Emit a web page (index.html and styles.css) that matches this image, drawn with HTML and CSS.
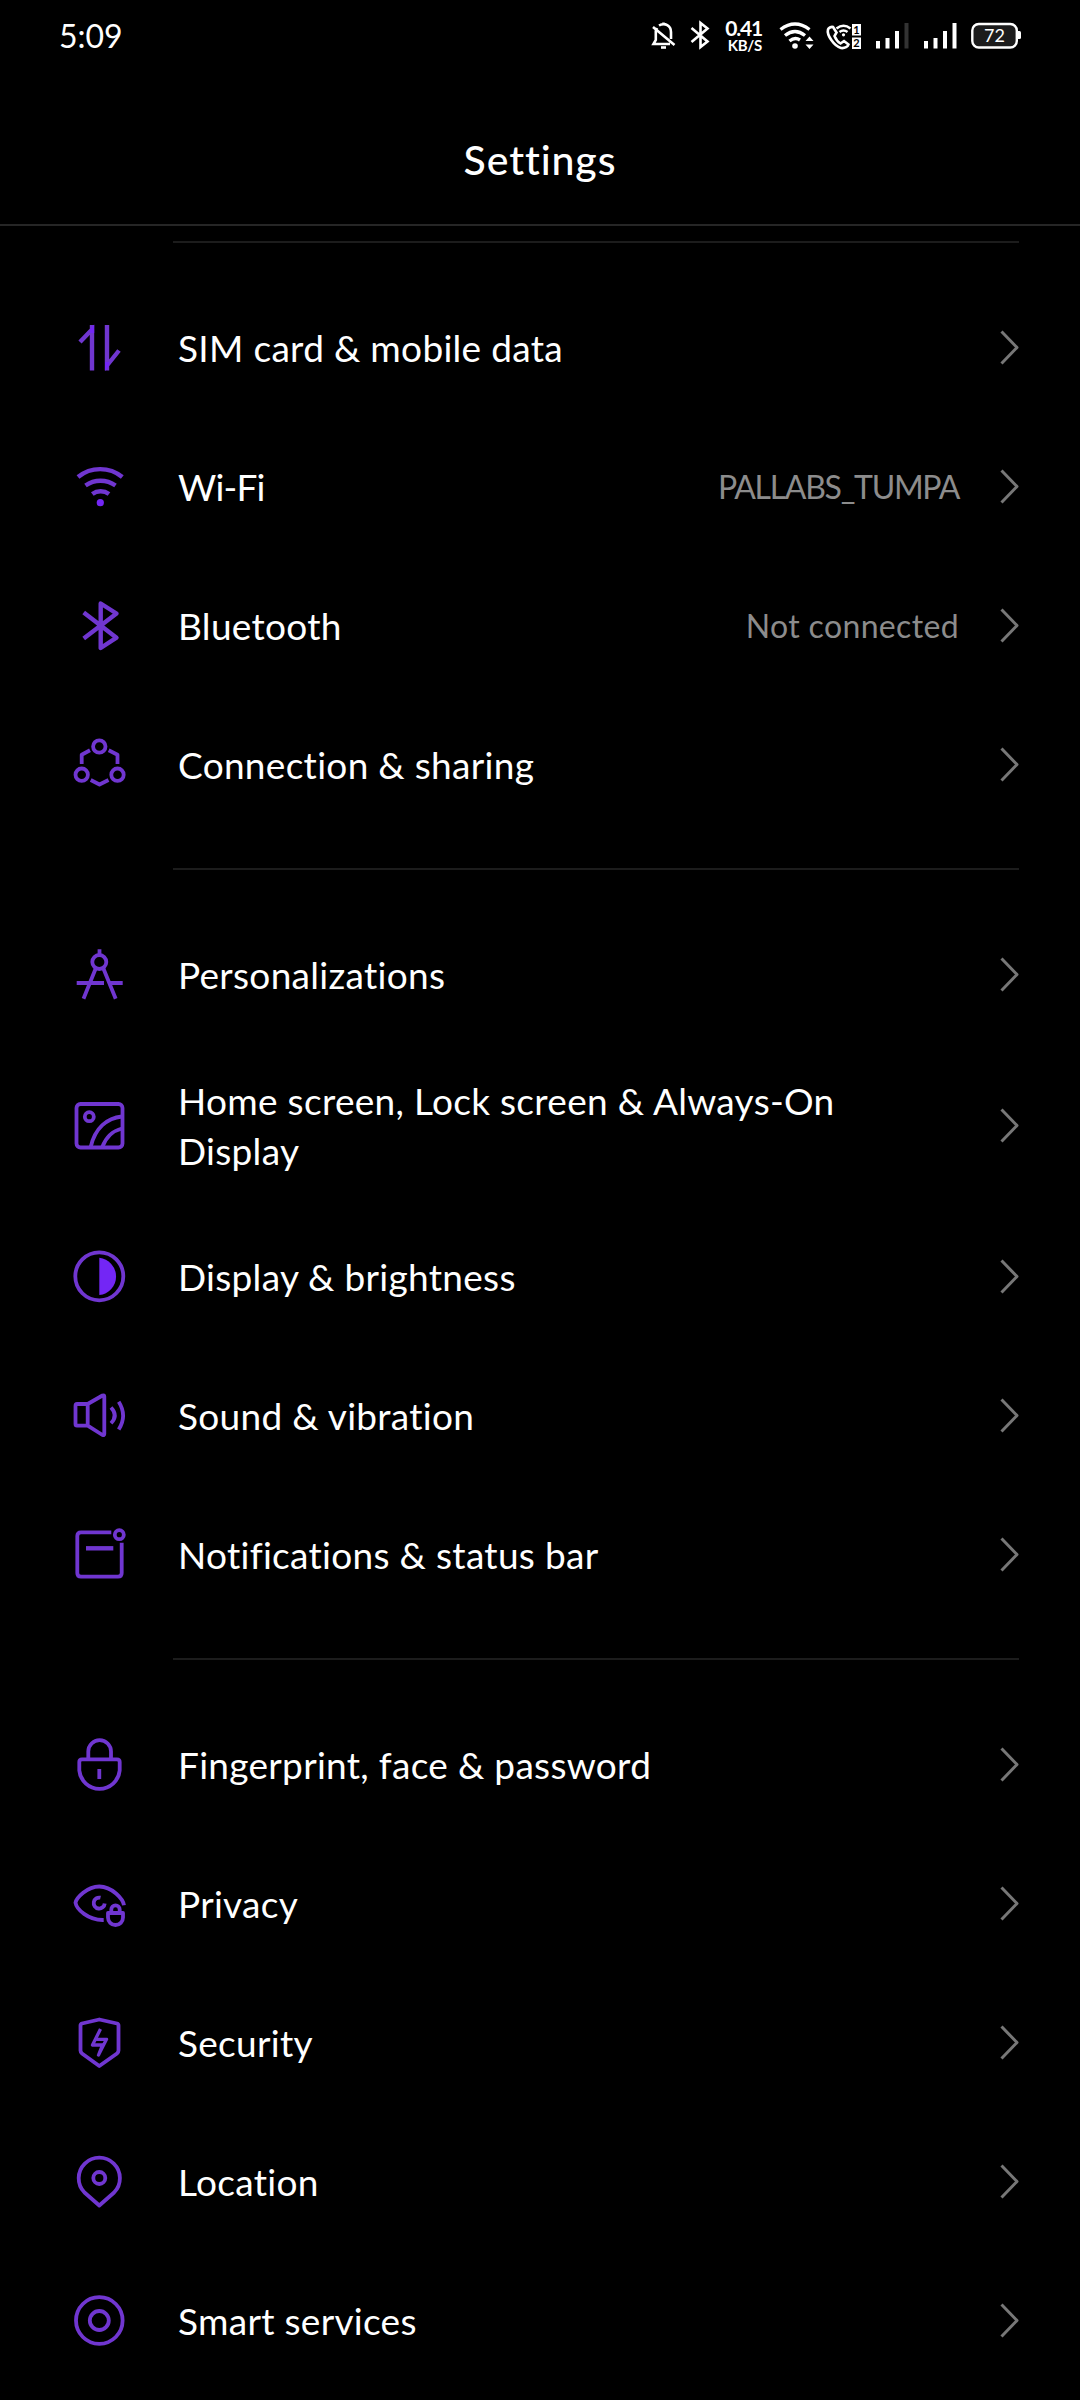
FILE: index.html
```html
<!DOCTYPE html>
<html lang="en">
<head>
    <meta charset="UTF-8">
    <meta name="viewport" content="width=device-width, initial-scale=1.0">
    <title>Settings</title>
    <link rel="stylesheet" href="styles.css">
</head>
<body>
    <!-- Status bar -->
    <div class="status-bar">
        <span class="time">5:09</span>
        <div class="status-icons">
            <svg width="25" height="30" viewBox="0 0 25 30">
                <path d="M6 8L4.800 11V20L2.500 24H19M8 5.500C14 2 20 6 20 12V19M12.500 2.500V4M2 7L23.500 25"/>
                <path d="M10 27.500H15"/>
            </svg>
            <svg width="21" height="30" viewBox="0 0 21 30">
                <path d="M1.500 8L17.500 21.500L10.500 27V3L17.500 8.500L1.500 22"/>
            </svg>
            <div class="speed">
                <span class="speed-value">0.41</span>
                <span class="speed-unit">KB/S</span>
            </div>
            <svg width="35" height="30" viewBox="0 0 35 30">
                <path class="thick" d="M3.500 9.500Q18 -1.500 32.500 9.500M8 15.500Q18 7.500 28 15.500M12.500 21Q18 16.500 23 20"/>
                <circle class="solid" cx="18" cy="26" r="2.800"/>
                <path class="solid" d="M28.500 21L32.500 16.500L36.500 21ZM28.500 24.500H36.500L32.500 29Z"/>
            </svg>
            <svg width="35" height="30" viewBox="0 0 35 30">
                <path d="M2 9.500C0.500 15 8 26 15 28C19 28.500 22 26.500 22.500 24.500L18 21L14.500 23.500C12 22 9.500 18.500 8.500 16L10.500 12.500L7 7C5 6.500 2.500 8 2 9.500Z"/>
                <path d="M10.500 8.500Q17.500 3 24.500 8.500M13.500 12Q17.500 9 21.500 12"/>
                <circle class="solid" cx="17.500" cy="14.800" r="1.600"/>
                <rect class="solid" x="26" y="4" width="9" height="11.500"/>
                <rect class="solid" x="26" y="17.500" width="9" height="11.500"/>
                <text class="sim-no" x="30.500" y="13.500">1</text>
                <text class="sim-no" x="30.500" y="27">2</text>
            </svg>
            <svg width="34" height="30" viewBox="0 0 34 30">
                <path class="solid" d="M1 21h4v7.500h-4zM10.500 18h4v10.500h-4zM20 11h4v17.500h-4z"/>
                <path class="off" d="M29.500 3h4v25.500h-4z"/>
            </svg>
            <svg width="34" height="30" viewBox="0 0 34 30">
                <path class="solid" d="M1 21h4v7.500h-4zM10.500 18h4v10.500h-4zM20 11h4v17.500h-4zM29.500 3h4v25.500h-4z"/>
            </svg>
            <svg width="51" height="30" viewBox="0 0 51 30">
                <rect class="battery" x="1.300" y="4" width="44.500" height="23.500" rx="6.500"/>
                <path class="solid" d="M47 11h1.500q1.500 0 1.500 1.500v5q0 1.500 -1.500 1.500h-1.500z"/>
                <text class="battery-level" x="23.500" y="21.500">72</text>
            </svg>
        </div>
    </div>

    <h1>Settings</h1>

    <!-- Connections -->
    <ul class="group">
        <li class="row">
            <svg class="icon" width="60" height="61" viewBox="0 0 60 61">
                <path class="wide" d="M10 25L22 12.500M22 8V53.500M37 8V53.500M37 48.500L49 33.500"/>
                <path class="fill" d="M20 12L24.200 7.500V16H20ZM35 45H39V49L35 54Z"/>
            </svg>
            <span class="label">SIM card &amp; mobile data</span>
            <svg class="arrow" width="20" height="37" viewBox="0 0 20 37"><path d="M1.500 2.500L17 18.500L1.500 34.500"/></svg>
        </li>
        <li class="row">
            <svg class="icon" width="60" height="61" viewBox="0 0 60 61">
                <path class="wide" d="M8 21A35 35 0 0 1 52.300 21M15.500 29.500A26 26 0 0 1 45.500 29.500M22.300 38A14 14 0 0 1 39 38"/>
                <circle class="fill" cx="30.300" cy="46.700" r="3.600"/>
            </svg>
            <span class="label narrow">Wi-Fi</span>
            <span class="value caps">PALLABS_TUMPA</span>
            <svg class="arrow" width="20" height="37" viewBox="0 0 20 37"><path d="M1.500 2.500L17 18.500L1.500 34.500"/></svg>
        </li>
        <li class="row">
            <svg class="icon" width="60" height="61" viewBox="0 0 60 61">
                <path class="wide" d="M13.700 17.500L46.500 42.700L30.700 53V8.500L46.500 18.500L13.700 43.500"/>
            </svg>
            <span class="label">Bluetooth</span>
            <span class="value">Not connected</span>
            <svg class="arrow" width="20" height="37" viewBox="0 0 20 37"><path d="M1.500 2.500L17 18.500L1.500 34.500"/></svg>
        </li>
        <li class="row">
            <svg class="icon" width="60" height="61" viewBox="0 0 60 61">
                <circle cx="29.300" cy="12.500" r="6.200"/>
                <circle cx="11.700" cy="40.700" r="6.200"/>
                <circle cx="47.500" cy="40.700" r="6.200"/>
                <path d="M11.700 30V20.700L20 16.300M38.700 16.300L47.500 20.700V30M20.700 46L29.500 50.500L38.500 46"/>
            </svg>
            <span class="label">Connection &amp; sharing</span>
            <svg class="arrow" width="20" height="37" viewBox="0 0 20 37"><path d="M1.500 2.500L17 18.500L1.500 34.500"/></svg>
        </li>
    </ul>

    <!-- Look and feel -->
    <ul class="group">
        <li class="row">
            <svg class="icon" width="60" height="61" viewBox="0 0 60 61">
                <circle cx="29.300" cy="18" r="7"/>
                <path d="M29.500 5.300V11M25.800 24.300L13.500 54.700M33.300 24.300L45.700 54.700M6.700 39H34M38.700 39H52.700"/>
            </svg>
            <span class="label">Personalizations</span>
            <svg class="arrow" width="20" height="37" viewBox="0 0 20 37"><path d="M1.500 2.500L17 18.500L1.500 34.500"/></svg>
        </li>
        <li class="row tall">
            <svg class="icon" width="60" height="61" viewBox="0 0 60 61">
                <rect x="6.500" y="9" width="46" height="43.500" rx="4"/>
                <circle cx="19.300" cy="21.700" r="4.500"/>
                <path d="M20.700 52C25 33 37 23 52 21.500M32.300 52C36 42 42 36 52 33.500"/>
            </svg>
            <span class="label">Home screen, Lock screen &amp; Always-On<br>Display</span>
            <svg class="arrow" width="20" height="37" viewBox="0 0 20 37"><path d="M1.500 2.500L17 18.500L1.500 34.500"/></svg>
        </li>
        <li class="row">
            <svg class="icon" width="60" height="61" viewBox="0 0 60 61">
                <circle cx="29.300" cy="30.300" r="24"/>
                <path class="fill" d="M29.300 11.800A18.700 18.700 0 0 1 29.300 49Z"/>
            </svg>
            <span class="label">Display &amp; brightness</span>
            <svg class="arrow" width="20" height="37" viewBox="0 0 20 37"><path d="M1.500 2.500L17 18.500L1.500 34.500"/></svg>
        </li>
        <li class="row">
            <svg class="icon" width="60" height="61" viewBox="0 0 60 61">
                <path d="M17.700 19H7Q5.500 19 5.500 21V39Q5.500 40.700 7 40.700H17.700ZM17.700 19L32.500 10.500Q34.300 10 34.300 11.500V49Q34.300 50.500 32.500 50L17.700 40.700M41 22.500Q48.500 30.500 41 38.300M48.700 16.700Q57.500 30.500 48.700 44.500"/>
            </svg>
            <span class="label">Sound &amp; vibration</span>
            <svg class="arrow" width="20" height="37" viewBox="0 0 20 37"><path d="M1.500 2.500L17 18.500L1.500 34.500"/></svg>
        </li>
        <li class="row">
            <svg class="icon" width="60" height="61" viewBox="0 0 60 61">
                <path d="M41.300 8.300H11Q7.300 8.300 7.300 12V49Q7.300 52.700 11 52.700H48Q51.700 52.700 51.700 49V18.700"/>
                <path class="wide" d="M16 24.300H43.300"/>
                <circle cx="49.300" cy="10.700" r="4.500"/>
            </svg>
            <span class="label">Notifications &amp; status bar</span>
            <svg class="arrow" width="20" height="37" viewBox="0 0 20 37"><path d="M1.500 2.500L17 18.500L1.500 34.500"/></svg>
        </li>
    </ul>

    <!-- Privacy and safety -->
    <ul class="group">
        <li class="row">
            <svg class="icon" width="60" height="61" viewBox="0 0 60 61">
                <path d="M18.300 25V17.500A11.300 11.300 0 0 1 41 17.500V25M12 25.300H47Q49.700 25.300 49.700 28V36.500A20.300 20.300 0 0 1 9.300 36.500V28Q9.300 25.300 12 25.300ZM29.300 35V45"/>
            </svg>
            <span class="label">Fingerprint, face &amp; password</span>
            <svg class="arrow" width="20" height="37" viewBox="0 0 20 37"><path d="M1.500 2.500L17 18.500L1.500 34.500"/></svg>
        </li>
        <li class="row">
            <svg class="icon" width="60" height="61" viewBox="0 0 60 61">
                <path d="M54 32.300C53 26 42 13.500 29.300 13.500C17 13.500 6.500 25 5.500 29.700C6.500 36 18 47.500 33.700 47"/>
                <path d="M30.500 24.700A5.500 5.500 0 1 0 34.700 30.500"/>
                <path d="M41.300 39.500V36.500A4.200 4.200 0 0 1 49.700 36.500V39.500M38 40H53V44.500A7.500 7.500 0 0 1 38 44.500Z"/>
            </svg>
            <span class="label">Privacy</span>
            <svg class="arrow" width="20" height="37" viewBox="0 0 20 37"><path d="M1.500 2.500L17 18.500L1.500 34.500"/></svg>
        </li>
        <li class="row">
            <svg class="icon" width="60" height="61" viewBox="0 0 60 61">
                <path d="M29.300 7.500L47 11.500Q48.500 12 48.500 13.500V38.500Q48.500 40 47 41.500L29.300 54L12 41.500Q10.500 40 10.500 38.500V13.500Q10.500 12 12 11.500Z"/>
                <path class="thin" d="M30.500 17L22.500 33H32.500L28.500 43L36.500 27.300H26.500"/>
            </svg>
            <span class="label">Security</span>
            <svg class="arrow" width="20" height="37" viewBox="0 0 20 37"><path d="M1.500 2.500L17 18.500L1.500 34.500"/></svg>
        </li>
        <li class="row">
            <svg class="icon" width="60" height="61" viewBox="0 0 60 61">
                <path d="M29.300 54.500L14.500 41.500A20.600 20.600 0 1 1 44.100 41.500Z"/>
                <circle cx="29.300" cy="27" r="6"/>
            </svg>
            <span class="label">Location</span>
            <svg class="arrow" width="20" height="37" viewBox="0 0 20 37"><path d="M1.500 2.500L17 18.500L1.500 34.500"/></svg>
        </li>
        <li class="row">
            <svg class="icon" width="60" height="61" viewBox="0 0 60 61">
                <circle cx="29.300" cy="30.500" r="23.300"/>
                <circle cx="29.300" cy="30.500" r="9.500"/>
            </svg>
            <span class="label">Smart services</span>
            <svg class="arrow" width="20" height="37" viewBox="0 0 20 37"><path d="M1.500 2.500L17 18.500L1.500 34.500"/></svg>
        </li>
    </ul>
</body>
</html>
```
FILE: styles.css
```css
* {
    box-sizing: border-box;
}
body {
    font-family: Lato, "Liberation Sans", sans-serif;
    font-variant-ligatures: none;
    margin: 0;
    padding: 0;
    width: 1080px;
    height: 2400px;
    overflow: hidden;
    background-color: #000;
    color: #fff;
}
.status-bar {
    display: flex;
    justify-content: space-between;
    align-items: center;
    height: 70px;
    padding: 0 58px 0 59px;
}
.time {
    font-size: 32px;
}
.status-icons {
    display: flex;
    align-items: center;
    gap: 14px;
}
.status-icons svg {
    overflow: visible;
    fill: none;
    stroke: #fff;
    stroke-width: 2.6;
}
.status-icons .thick {
    stroke-width: 3.4;
}
.status-icons .solid {
    fill: #fff;
    stroke: none;
}
.status-icons .off {
    fill: #333;
    stroke: none;
}
.status-icons .battery {
    fill: #1c1c1c;
    stroke-width: 2.4;
}
.status-icons text {
    stroke: none;
    text-anchor: middle;
}
.status-icons .battery-level {
    fill: #fff;
    font-size: 18px;
}
.status-icons .sim-no {
    fill: #000;
    font-size: 11px;
    font-weight: bold;
}
.speed {
    display: flex;
    flex-direction: column;
    align-items: flex-end;
    width: 38px;
    padding-right: 1px;
    font-weight: bold;
}
.speed-value {
    font-size: 21px;
    line-height: 20px;
    letter-spacing: -1.2px;
}
.speed-unit {
    font-size: 15px;
    line-height: 14px;
    letter-spacing: -0.3px;
}
h1 {
    height: 156px;
    margin: 0;
    border-bottom: 2px solid #262626;
    text-align: center;
    font-size: 41px;
    font-weight: 500;
    line-height: 180px;
    letter-spacing: 0.9px;
}
.group {
    list-style: none;
    margin: 0 60px 34px 70px;
    padding: 0;
}
h1 + .group {
    margin-top: 15px;
}
/* Divider starts at the label, not at the icon */
.group::before {
    content: '';
    display: block;
    height: 2px;
    margin: 0 1px 35px 103px;
    background-color: #1c1c1c;
}
.row {
    display: flex;
    align-items: center;
    height: 139px;
}
.row.tall {
    height: 163px;
}
.icon {
    flex: none;
    margin-right: 48px;
    fill: none;
    stroke: #7036d0;
    stroke-width: 3.8;
    stroke-linejoin: round;
}
.icon .wide {
    stroke-width: 4.4;
}
.icon .thin {
    stroke-width: 3.3;
}
.icon .fill {
    fill: #7326f5;
    stroke: none;
}
.label {
    flex: 1;
    font-size: 37px;
    line-height: 50px;
    letter-spacing: 0.3px;
    white-space: nowrap;
}
.label.narrow {
    letter-spacing: -0.8px;
}
.value {
    margin-right: 41px;
    color: #8c8c8c;
    font-size: 32px;
    letter-spacing: 0.35px;
}
.value.caps {
    letter-spacing: -1.3px;
}
.arrow {
    flex: none;
    fill: none;
    stroke: #777;
    stroke-width: 3;
    stroke-linejoin: round;
}
```
